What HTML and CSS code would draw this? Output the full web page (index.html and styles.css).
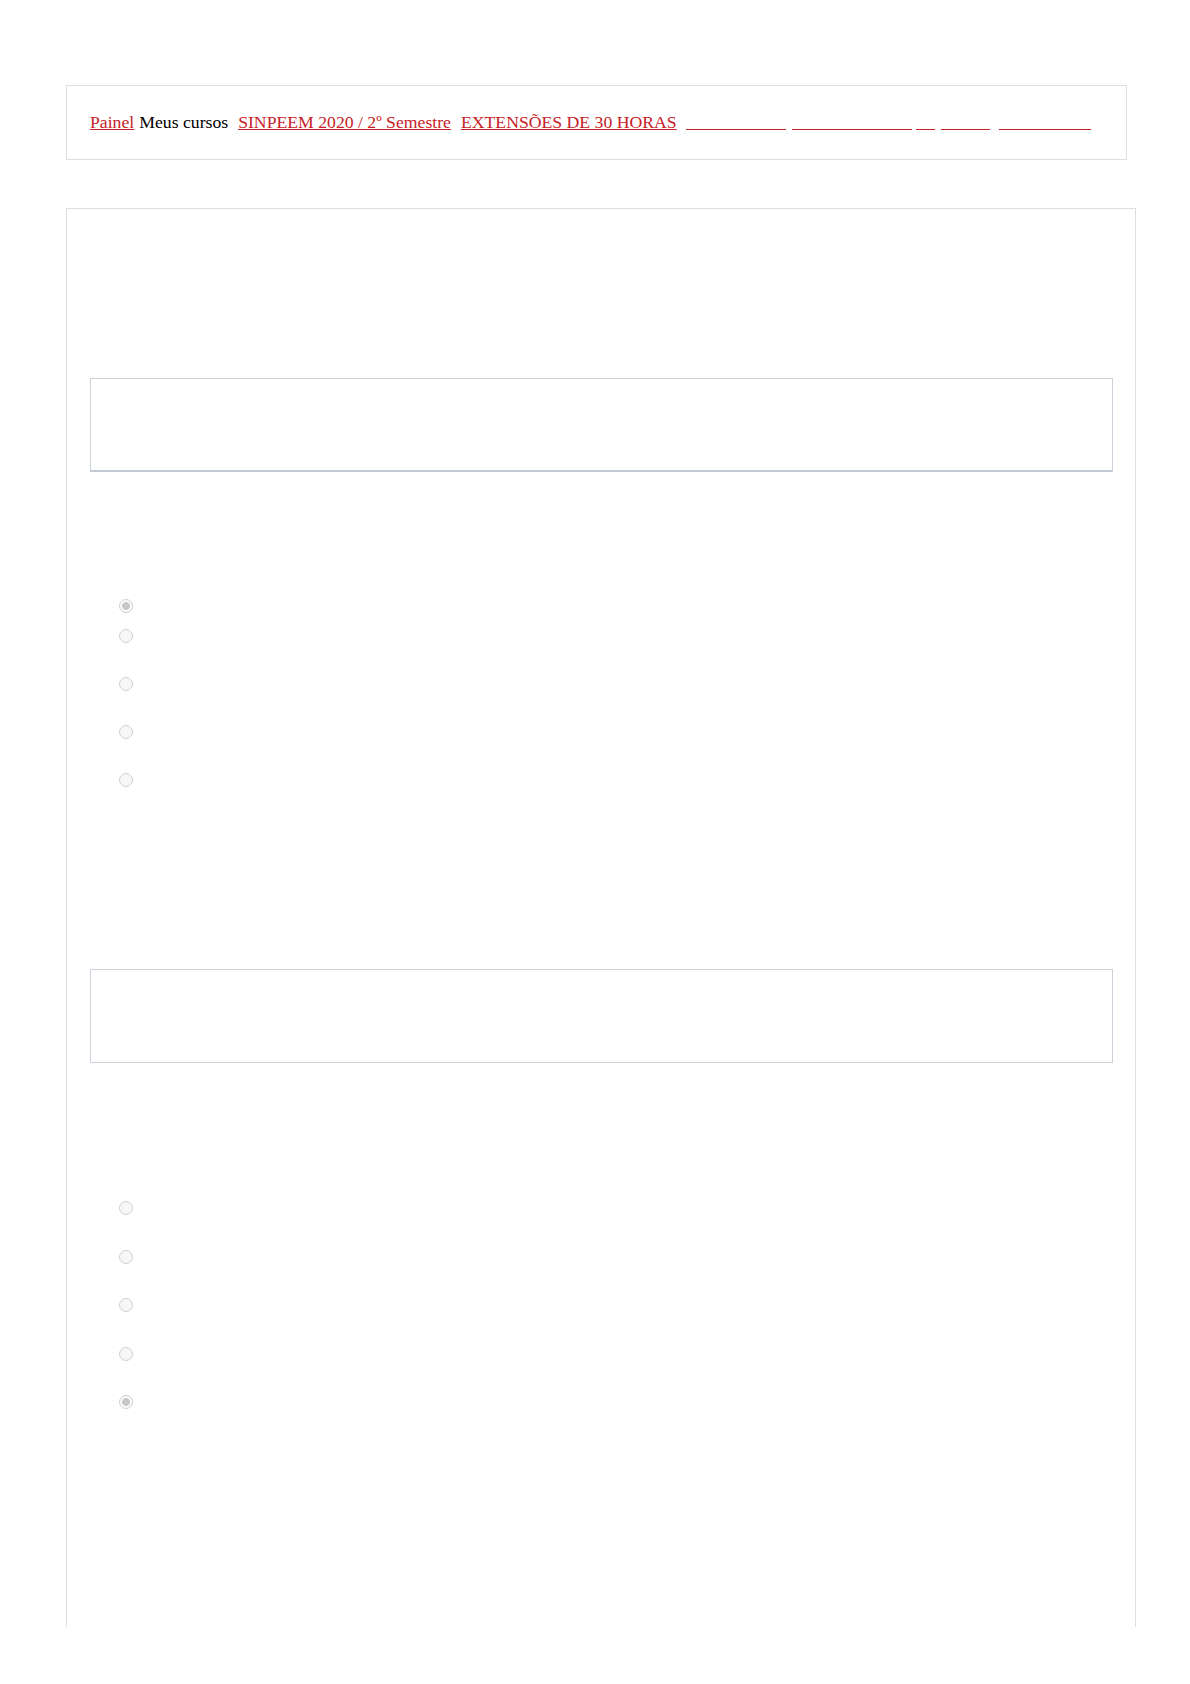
FILE: index.html
```html
<!DOCTYPE html>
<html lang="pt-BR">
<head>
    <meta charset="UTF-8">
    <meta name="viewport" content="width=device-width, initial-scale=1.0">
    <title>Revisão da tentativa</title>
    <link rel="stylesheet" href="styles.css">
</head>
<body>
    <div class="page">
        <!-- Breadcrumb -->
        <nav class="breadcrumb-box">
            <a href="#" class="crumb">Painel</a><span class="crumb gap-5">Meus cursos</span><a href="#" class="crumb gap-10">SINPEEM 2020 / 2º Semestre</a><a href="#" class="crumb gap-10">EXTENSÕES DE 30 HORAS</a><a href="#" class="blank gap-9 w-100"></a><a href="#" class="blank gap-6 w-120"></a><a href="#" class="blank gap-4 w-19"></a><a href="#" class="blank gap-6 w-49"></a><a href="#" class="blank gap-9 w-92"></a>
        </nav>

        <!-- Attempt review -->
        <main class="main-box">
            <section class="question">
                <div class="qtext qtext-focus"></div>
                <div class="answers">
                    <label class="answer short"><input type="radio" name="q1" checked disabled></label>
                    <label class="answer"><input type="radio" name="q1" disabled></label>
                    <label class="answer"><input type="radio" name="q1" disabled></label>
                    <label class="answer"><input type="radio" name="q1" disabled></label>
                    <label class="answer"><input type="radio" name="q1" disabled></label>
                </div>
            </section>

            <section class="question second">
                <div class="qtext"></div>
                <div class="answers answers-second">
                    <label class="answer wide"><input type="radio" name="q2" disabled></label>
                    <label class="answer wide"><input type="radio" name="q2" disabled></label>
                    <label class="answer wide"><input type="radio" name="q2" disabled></label>
                    <label class="answer wide"><input type="radio" name="q2" disabled></label>
                    <label class="answer wide"><input type="radio" name="q2" checked disabled></label>
                </div>
            </section>
        </main>
    </div>
</body>
</html>
```

FILE: styles.css
```css
body {
    margin: 0;
    background-color: #fff;
    color: #000;
    font-family: 'Liberation Serif', 'Times New Roman', serif;
    font-size: 17.7px;
}

.page {
    padding: 85px 0 0 66px;
}

/* Breadcrumb */

.breadcrumb-box {
    width: 1061px;
    box-sizing: border-box;
    border: 1px solid #dedede;
    padding: 26px 23px 27px;
    line-height: 20px;
    white-space: nowrap;
}

.breadcrumb-box a {
    color: #c62128;
    text-decoration: underline;
}

.crumb {
    display: inline;
}

.blank {
    display: inline-block;
    height: 0;
    border-bottom: 1px solid #c62128;
    vertical-align: -2px;
}

.gap-4 { margin-left: 4px; }
.gap-5 { margin-left: 5px; }
.gap-6 { margin-left: 6px; }
.gap-9 { margin-left: 9px; }
.gap-10 { margin-left: 10px; }

.w-19 { width: 19px; }
.w-49 { width: 49px; }
.w-92 { width: 92px; }
.w-100 { width: 100px; }
.w-120 { width: 120px; }

/* Main box */

.main-box {
    display: block;
    margin-top: 48px;
    width: 1070px;
    height: 1419px;
    box-sizing: border-box;
    border: 1px solid #dedede;
    border-bottom: none;
    padding: 169px 22px 0 23px;
}

.qtext {
    height: 92px;
    border: 1px solid #ccd2da;
}

.qtext-focus {
    height: 91px;
    border-bottom-width: 2px;
    border-bottom-color: #c3c9d2;
}

.answers {
    display: flex;
    flex-direction: column;
    margin-top: 127px;
    padding-left: 29px;
}

.answers-second {
    margin-top: 138px;
}

.answer {
    display: flex;
    align-items: flex-start;
    height: 48px;
}

.answer.short {
    height: 30px;
}

.answer.wide {
    height: 48.5px;
}

.answer input {
    appearance: none;
    -webkit-appearance: none;
    margin: 0;
    width: 14px;
    height: 14px;
    box-sizing: border-box;
    border: 1px solid #d0d0d0;
    border-radius: 50%;
    background-color: #f7f7f7;
}

.answer input:checked {
    background: radial-gradient(circle, #c8c8c8 0 3.6px, #fafafa 4.2px);
}

.question.second {
    margin-top: 148px;
}
```
